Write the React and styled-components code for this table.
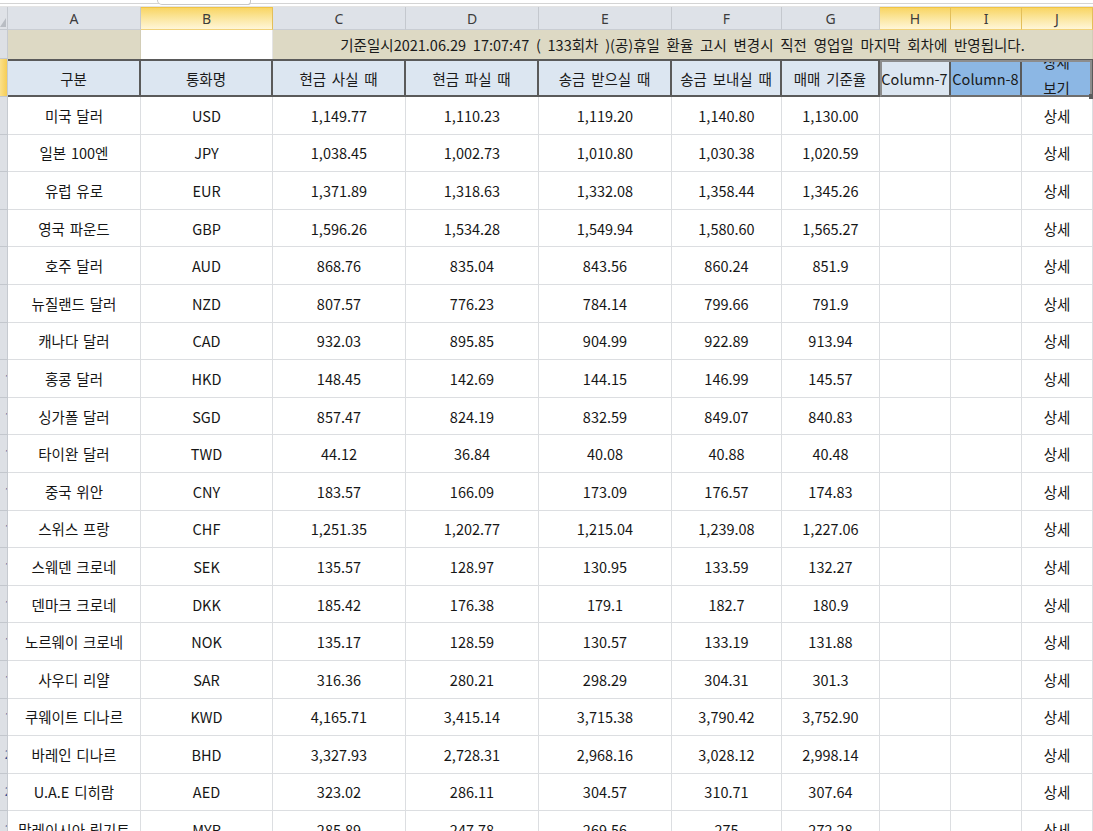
import React from "react";
import styled, { createGlobalStyle, css } from "styled-components";

const Global = createGlobalStyle`
  html, body { margin: 0; padding: 0; background: #ffffff; }
  body { font-family: "Noto Sans CJK KR", "Noto Sans", sans-serif; overflow: hidden; }
`;

const COLS = "8px 133px 132px 133px 133px 133px 110px 98px 71px 71px 71px";
const FONT = `"Noto Sans CJK KR", "Noto Sans", sans-serif`;

const Sheet = styled.div`
  position: relative;
  width: 1093px;
  height: 831px;
  overflow: hidden;
  background: #fff;
`;

const TopStrip = styled.div`
  position: relative;
  height: 7px;
  background: #fff;
  display: flex;
  align-items: flex-start;
  &::before {
    content: "";
    position: absolute;
    left: 0;
    right: 0;
    top: 3px;
    height: 2px;
    border-top: 1px solid #d4d4d4;
    border-bottom: 1px solid #e4e4e4;
  }
`;

const Tab = styled.div`
  position: relative;
  z-index: 1;
  margin-left: 157px;
  width: 92px;
  height: 4px;
  background: #fff;
  border: 1px solid #c9c9c9;
  border-top: none;
  border-radius: 0 0 4px 6px;
`;

const Grid = styled.div`
  display: grid;
  grid-template-columns: ${COLS};
  grid-template-rows: 23px 29px 38px repeat(20, 37.6px);
`;

const Corner = styled.div`
  background: #dfe2e7;
  border-right: 1px solid #c5c9cf;
  border-bottom: 1px solid #c5c9cf;
  position: relative;
  &::after {
    content: "";
    position: absolute;
    right: 1px;
    bottom: 2px;
    border-style: solid;
    border-width: 0 0 9px 6px;
    border-color: transparent transparent #b9bdc3 transparent;
  }
`;

const ColHead = styled.div`
  box-sizing: border-box;
  display: flex;
  align-items: center;
  justify-content: center;
  font-family: "Noto Sans", "Liberation Sans", sans-serif;
  font-size: 14px;
  color: #3c3c3c;
  background: #dee2e8;
  border-right: 1px solid #c4c8ce;
  border-bottom: 1px solid #c9cdd3;
  ${(p) =>
    p.$selected &&
    css`
      background: linear-gradient(#f9d564 0%, #fbe59a 45%, #fff6d8 100%);
      border-right: 1px solid #e3bf5a;
      border-bottom: 1px solid #f1d27a;
      border-top: 1px solid #f0c445;
    `}
`;

const RowHead = styled.div`
  box-sizing: border-box;
  overflow: hidden;
  position: relative;
  background: ${(p) => (p.$selected ? "linear-gradient(90deg, #fbe08a, #f6cd55)" : "#dde0e5")};
  border-right: 1px solid #c6cad0;
  border-bottom: 1px solid #c3c7cd;
`;

const RowNum = styled.span`
  position: absolute;
  right: 0;
  top: 0;
  bottom: 0;
  width: 25px;
  display: flex;
  align-items: center;
  justify-content: center;
  font-family: "Noto Sans", sans-serif;
  font-size: 12px;
  color: #35579a;
  transform: translateX(17px);
`;

const Cell = styled.div`
  box-sizing: border-box;
  display: flex;
  align-items: center;
  justify-content: center;
  white-space: nowrap;
  overflow: hidden;
  font-family: ${FONT};
  font-size: 14.5px;
  word-spacing: 1.5px;
  color: #161616;
  background: #fff;
  border-right: 1px solid #dcdee1;
  border-bottom: 1px solid #dcdee1;
`;

const TitleCell = styled(Cell)`
  background: ${(p) => (p.$blank ? "#ffffff" : "#ddd9c4")};
  border-right: 1px solid ${(p) => (p.$blank ? "#e4e4e4" : "#d2cdb6")};
  border-bottom: none;
  grid-column: ${(p) => (p.$span ? `span ${p.$span}` : "auto")};
  word-spacing: 3.5px;
  color: #1a1a1a;
`;

const HeadCell = styled(Cell)`
  background: ${(p) => (p.$tone === "dark" ? "#8cb7e4" : "#dce6f1")};
  border-top: 2px solid #5a5a5a;
  border-bottom: 2px solid #5a5a5a;
  border-right: 2px solid #5a5a5a;
  word-spacing: 2.5px;
  color: #1a1a1a;
  ${(p) =>
    p.$wrap &&
    css`
      white-space: normal;
      flex-direction: column;
      line-height: 26px;
      padding-bottom: 7px;
      text-align: center;
    `}
`;

const SelectionBox = styled.div`
  position: absolute;
  left: 880px;
  top: 60px;
  width: 212px;
  height: 37px;
  box-sizing: border-box;
  border: 2px solid #8d8d8d;
  border-bottom-color: #6e6e6e;
  pointer-events: none;
  &::after {
    content: "";
    position: absolute;
    right: -4px;
    bottom: -4px;
    width: 5px;
    height: 5px;
    background: #5d5d5d;
  }
`;

const heads = [
  { t: "구분" },
  { t: "통화명" },
  { t: "현금 사실 때" },
  { t: "현금 파실 때" },
  { t: "송금 받으실 때" },
  { t: "송금 보내실 때" },
  { t: "매매 기준율" },
  { t: "Column-7" },
  { t: "Column-8", dark: true },
  { t: ["상세", "보기"], dark: true },
];

const rows = [
  ["미국 달러", "USD", "1,149.77", "1,110.23", "1,119.20", "1,140.80", "1,130.00"],
  ["일본 100엔", "JPY", "1,038.45", "1,002.73", "1,010.80", "1,030.38", "1,020.59"],
  ["유럽 유로", "EUR", "1,371.89", "1,318.63", "1,332.08", "1,358.44", "1,345.26"],
  ["영국 파운드", "GBP", "1,596.26", "1,534.28", "1,549.94", "1,580.60", "1,565.27"],
  ["호주 달러", "AUD", "868.76", "835.04", "843.56", "860.24", "851.9"],
  ["뉴질랜드 달러", "NZD", "807.57", "776.23", "784.14", "799.66", "791.9"],
  ["캐나다 달러", "CAD", "932.03", "895.85", "904.99", "922.89", "913.94"],
  ["홍콩 달러", "HKD", "148.45", "142.69", "144.15", "146.99", "145.57"],
  ["싱가폴 달러", "SGD", "857.47", "824.19", "832.59", "849.07", "840.83"],
  ["타이완 달러", "TWD", "44.12", "36.84", "40.08", "40.88", "40.48"],
  ["중국 위안", "CNY", "183.57", "166.09", "173.09", "176.57", "174.83"],
  ["스위스 프랑", "CHF", "1,251.35", "1,202.77", "1,215.04", "1,239.08", "1,227.06"],
  ["스웨덴 크로네", "SEK", "135.57", "128.97", "130.95", "133.59", "132.27"],
  ["덴마크 크로네", "DKK", "185.42", "176.38", "179.1", "182.7", "180.9"],
  ["노르웨이 크로네", "NOK", "135.17", "128.59", "130.57", "133.19", "131.88"],
  ["사우디 리얄", "SAR", "316.36", "280.21", "298.29", "304.31", "301.3"],
  ["쿠웨이트 디나르", "KWD", "4,165.71", "3,415.14", "3,715.38", "3,790.42", "3,752.90"],
  ["바레인 디나르", "BHD", "3,327.93", "2,728.31", "2,968.16", "3,028.12", "2,998.14"],
  ["U.A.E 디히람", "AED", "323.02", "286.11", "304.57", "310.71", "307.64"],
  ["말레이시아 링기트", "MYR", "285.89", "247.78", "269.56", "275", "272.28"],
];

const letters = ["A", "B", "C", "D", "E", "F", "G", "H", "I", "J"];
const selectedCols = new Set(["B", "H", "I", "J"]);

export default function App() {
  return (
    <Sheet>
      <Global />
      <TopStrip>
        <Tab />
      </TopStrip>
      <Grid>
        <Corner />
        {letters.map((l) => (
          <ColHead key={l} $selected={selectedCols.has(l)}>
            {l}
          </ColHead>
        ))}

        <RowHead>
          <RowNum>1</RowNum>
        </RowHead>
        <TitleCell />
        <TitleCell $blank />
        <TitleCell $span={8}>
          기준일시2021.06.29 17:07:47 ( 133회차 )(공)휴일 환율 고시 변경시 직전 영업일 마지막 회차에 반영됩니다.
        </TitleCell>

        <RowHead $selected>
          <RowNum>2</RowNum>
        </RowHead>
        {heads.map((h, i) => (
          <HeadCell key={i} $tone={h.dark ? "dark" : "light"} $wrap={Array.isArray(h.t)}>
            {Array.isArray(h.t) ? h.t.map((line) => <span key={line}>{line}</span>) : h.t}
          </HeadCell>
        ))}

        {rows.map((r, ri) => (
          <React.Fragment key={r[1]}>
            <RowHead>
              <RowNum>{ri + 3}</RowNum>
            </RowHead>
            {r.map((v, ci) => (
              <Cell key={ci}>{v}</Cell>
            ))}
            <Cell />
            <Cell />
            <Cell>상세</Cell>
          </React.Fragment>
        ))}
      </Grid>
      <SelectionBox />
    </Sheet>
  );
}
